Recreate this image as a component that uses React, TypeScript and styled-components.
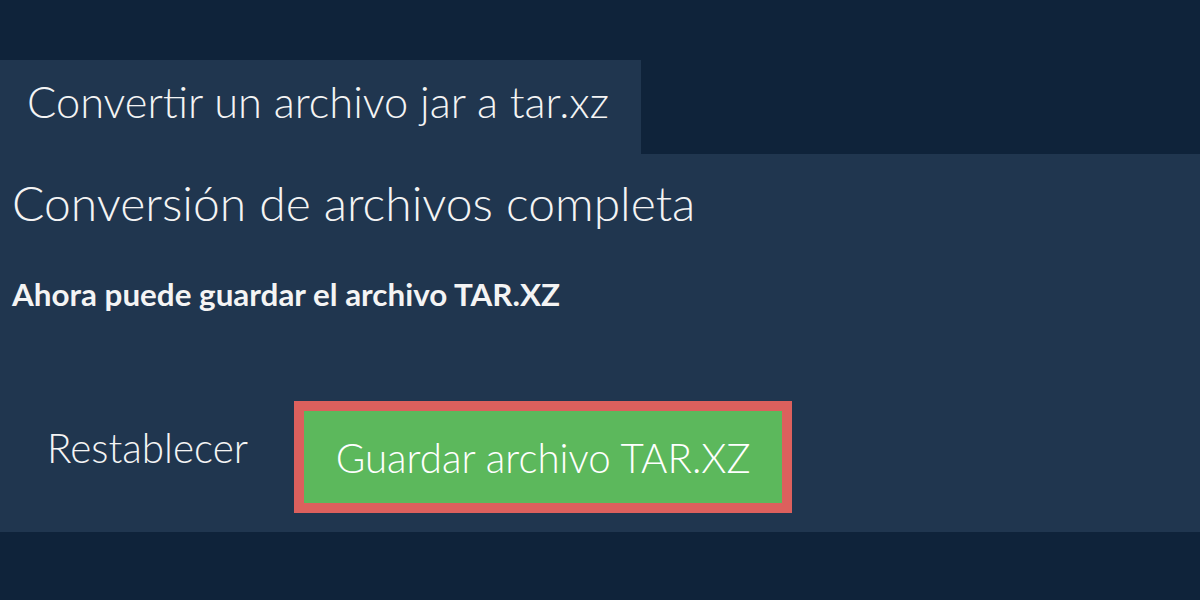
import styled, { createGlobalStyle } from "styled-components";

const GlobalStyle = createGlobalStyle`
  html, body {
    margin: 0;
    padding: 0;
    background: #0f233a;
  }
  body {
    font-family: Lato, "Open Sans", sans-serif;
    color: #f2f2f2;
  }
`

const Page = styled.div`
  width: 1200px;
  height: 600px;
  padding-top: 60px;
  box-sizing: border-box;
  background: #0f233a;
`

const Tab = styled.div`
  width: 641px;
  height: 94px;
  box-sizing: border-box;
  padding: 15px 0 0 27px;
  background: #20364f;
  font-size: 43.4px;
  font-weight: 300;
  color: #f4f4f4;
`

const Panel = styled.section`
  display: flex;
  flex-direction: column;
  height: 378px;
  box-sizing: border-box;
  padding: 20px 12px 0;
  background: #20364f;
`

const Heading = styled.h1`
  margin: 0;
  font-size: 48px;
  font-weight: 300;
  line-height: 58px;
  color: #f4f4f4;
`

const Message = styled.p`
  margin: 44px 0 0;
  font-size: 31.4px;
  font-weight: 700;
  line-height: 36px;
  color: #f4f4f4;
`

const Actions = styled.div`
  display: flex;
  align-items: center;
  gap: 46px;
  margin-top: 89px;
  padding-left: 35px;
`

const ResetLink = styled.button`
  border: none;
  background: transparent;
  padding: 0 0 19px;
  font-family: inherit;
  font-size: 40.4px;
  font-weight: 300;
  color: #f4f4f4;
`

const SaveButton = styled.button`
  width: 498px;
  height: 112px;
  box-sizing: border-box;
  border: 10px solid #dc605d;
  background: #5cb85c;
  font-family: inherit;
  font-size: 40.3px;
  font-weight: 300;
  color: #ffffff;
  padding: 0;
`

function App() {
    return (
        <>
            <GlobalStyle/>
            <Page>
                <Tab>Convertir un archivo jar a tar.xz</Tab>
                <Panel>
                    <Heading>Conversión de archivos completa</Heading>
                    <Message>Ahora puede guardar el archivo TAR.XZ</Message>
                    <Actions>
                        <ResetLink>Restablecer</ResetLink>
                        <SaveButton>Guardar archivo TAR.XZ</SaveButton>
                    </Actions>
                </Panel>
            </Page>
        </>
    )
}

export default App;
